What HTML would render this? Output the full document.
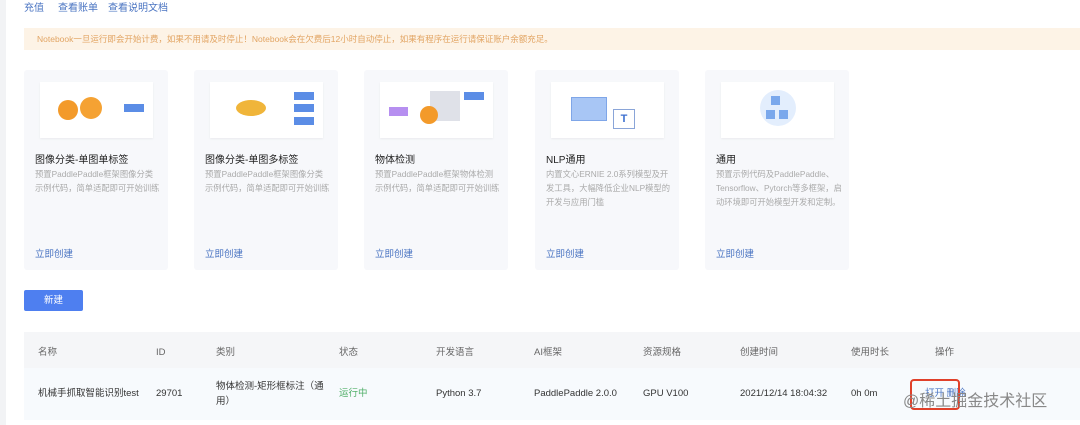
<!DOCTYPE html>
<html><head><meta charset="utf-8"><style>
*{margin:0;padding:0;box-sizing:border-box}
body{width:1080px;height:425px;background:#fff;position:relative;overflow:hidden;font-family:"Liberation Sans","Noto Sans CJK SC",sans-serif;color:#333}
.a{position:absolute;white-space:nowrap}
.strip{left:0;top:0;width:6px;height:425px;background:#f2f3f5}
.lk{color:#4a74c2;font-size:10px;top:2px;line-height:14px}
.ban{left:24px;top:28px;width:1056px;height:22px;background:#fdf3e6;color:#e2a564;font-size:8.5px;line-height:22px;padding-left:13px}
.card{position:absolute;top:70px;width:144px;height:200px;background:#f7f8fb;border-radius:3px}
.img{position:absolute;left:16px;top:12px;width:113px;height:56px;background:#fff;box-shadow:0 1px 2px rgba(0,0,0,.06)}
.t{position:absolute;left:11px;top:81px;font-size:10px;color:#222;white-space:nowrap}
.d{position:absolute;left:11px;top:97px;width:126px;font-size:8.3px;line-height:14px;color:#aaa}
.c{position:absolute;left:11px;top:176px;font-size:9.5px;color:#4a74c2}
.btn{left:24px;top:290px;width:59px;height:21px;background:#4e7ff0;border-radius:2px;color:#fff;font-size:9.5px;text-align:center;line-height:21px}
.th{left:24px;top:332px;width:1056px;height:36px;background:#f5f6f8}
.tr{left:24px;top:368px;width:1056px;height:52px;background:#f7fafd}
.h{font-size:9.5px;color:#666;top:345px;line-height:16px}
.r{font-size:9.5px;color:#333;top:386px;line-height:16px}
.tag{position:absolute;background:#5b8de6;width:20px;height:8px}
</style></head><body>
<div class="a strip"></div>
<div class="a lk" style="left:24px">充值</div>
<div class="a lk" style="left:58px">查看账单</div>
<div class="a lk" style="left:108px">查看说明文档</div>
<div class="a ban">Notebook一旦运行即会开始计费，如果不用请及时停止！Notebook会在欠费后12小时自动停止，如果有程序在运行请保证账户余额充足。</div>

<div class="card" style="left:24px"><div class="img">
<div style="position:absolute;left:18px;top:18px;width:20px;height:20px;border-radius:50%;background:#f39a2a"></div>
<div style="position:absolute;left:40px;top:15px;width:22px;height:22px;border-radius:50%;background:#f5a233"></div>
<div class="tag" style="left:84px;top:22px"></div></div>
<div class="t">图像分类-单图单标签</div><div class="d">预置PaddlePaddle框架图像分类示例代码，简单适配即可开始训练</div><div class="c">立即创建</div></div>

<div class="card" style="left:194px"><div class="img">
<div style="position:absolute;left:26px;top:18px;width:30px;height:16px;border-radius:50%;background:#f0b53a"></div>
<div class="tag" style="left:84px;top:10px"></div><div class="tag" style="left:84px;top:22px"></div><div class="tag" style="left:84px;top:35px"></div></div>
<div class="t">图像分类-单图多标签</div><div class="d">预置PaddlePaddle框架图像分类示例代码，简单适配即可开始训练</div><div class="c">立即创建</div></div>

<div class="card" style="left:364px"><div class="img">
<div style="position:absolute;left:9px;top:25px;width:19px;height:9px;background:#b68ff0"></div>
<div style="position:absolute;left:50px;top:9px;width:30px;height:30px;background:#dfe1e8"></div>
<div style="position:absolute;left:40px;top:24px;width:18px;height:18px;border-radius:50%;background:#f39a2a"></div>
<div class="tag" style="left:84px;top:10px"></div></div>
<div class="t">物体检测</div><div class="d">预置PaddlePaddle框架物体检测示例代码，简单适配即可开始训练</div><div class="c">立即创建</div></div>

<div class="card" style="left:535px"><div class="img">
<div style="position:absolute;left:20px;top:15px;width:36px;height:24px;background:#a8c6f5;border:1px solid #7fa6e8"></div>
<div style="position:absolute;left:62px;top:27px;width:22px;height:20px;border:1px solid #8aa5d8;background:#fff;color:#3d6fd0;font-size:11px;font-weight:bold;text-align:center;line-height:18px">T</div></div>
<div class="t">NLP通用</div><div class="d">内置文心ERNIE 2.0系列模型及开发工具，大幅降低企业NLP模型的开发与应用门槛</div><div class="c">立即创建</div></div>

<div class="card" style="left:705px"><div class="img">
<div style="position:absolute;left:39px;top:8px;width:36px;height:36px;border-radius:50%;background:#e3eefd"></div>
<div style="position:absolute;left:50px;top:14px;width:9px;height:9px;background:#7aa8ec"></div>
<div style="position:absolute;left:45px;top:28px;width:9px;height:9px;background:#7aa8ec"></div>
<div style="position:absolute;left:58px;top:28px;width:9px;height:9px;background:#7aa8ec"></div></div>
<div class="t">通用</div><div class="d">预置示例代码及PaddlePaddle、Tensorflow、Pytorch等多框架，启动环境即可开始模型开发和定制。</div><div class="c">立即创建</div></div>

<div class="a btn">新建</div>
<div class="a th"></div><div class="a tr"></div>
<div class="a h" style="left:38px">名称</div><div class="a h" style="left:156px">ID</div><div class="a h" style="left:216px">类别</div><div class="a h" style="left:339px">状态</div><div class="a h" style="left:436px">开发语言</div><div class="a h" style="left:534px">AI框架</div><div class="a h" style="left:643px">资源规格</div><div class="a h" style="left:740px">创建时间</div><div class="a h" style="left:851px">使用时长</div><div class="a h" style="left:935px">操作</div>
<div class="a r" style="left:38px">机械手抓取智能识别test</div><div class="a r" style="left:156px">29701</div>
<div class="a" style="left:216px;top:379px;font-size:9.5px;line-height:15px;white-space:normal;width:112px">物体检测-矩形框标注（通用）</div>
<div class="a r" style="left:339px;color:#52b06a">运行中</div><div class="a r" style="left:436px">Python 3.7</div><div class="a r" style="left:534px">PaddlePaddle 2.0.0</div><div class="a r" style="left:643px">GPU V100</div><div class="a r" style="left:740px">2021/12/14 18:04:32</div><div class="a r" style="left:851px">0h 0m</div>
<div class="a r" style="left:925px;color:#4a74c2">打开 删除</div>
<div class="a" style="left:910px;top:379px;width:50px;height:31px;border:2px solid #e0402a;border-radius:4px"></div>
<div class="a" style="left:903px;top:387px;font-size:16px;color:#888">@稀土掘金技术社区</div>
</body></html>
